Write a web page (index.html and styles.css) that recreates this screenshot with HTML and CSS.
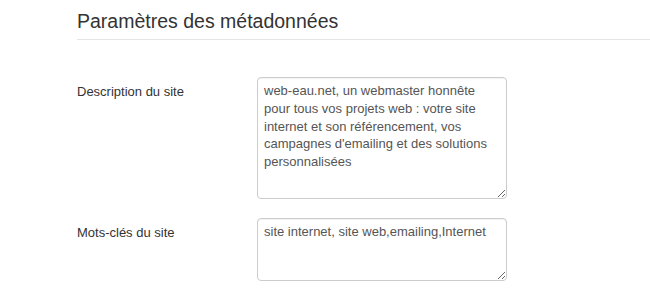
FILE: index.html
```html
<!DOCTYPE html>
<html lang="fr">

<head>
    <meta charset="UTF-8">
    <meta name="viewport" content="width=device-width, initial-scale=1.0">
    <title>Paramètres des métadonnées</title>
    <link rel="stylesheet" href="styles.css">
</head>

<body>
    <form id="metaForm">
        <fieldset class="meta-fieldset">
            <h2 class="meta-title">Paramètres des métadonnées</h2>

            <div class="form-row">
                <label class="form-label" for="siteDesc">Description du site</label>
                <textarea id="siteDesc" class="form-field field-desc">web-eau.net, un webmaster honnête pour tous vos projets web : votre site internet et son référencement, vos campagnes d'emailing et des solutions personnalisées</textarea>
            </div>

            <div class="form-row">
                <label class="form-label" for="siteKeys">Mots-clés du site</label>
                <textarea id="siteKeys" class="form-field field-keys">site internet, site web,emailing,Internet</textarea>
            </div>
        </fieldset>
    </form>
</body>

</html>
```

FILE: styles.css
```css
body {
    margin: 0;
    font-family: "Liberation Sans", Arial, sans-serif;
    font-size: 13px;
    color: #333;
    background-color: #fff;
}

.meta-fieldset {
    border: none;
    margin: 0;
    padding: 0 0 0 77px;
}

.meta-title {
    margin: 0 0 37px 0;
    padding: 11px 0 7px 0;
    font-size: 19.5px;
    font-weight: normal;
    line-height: 21px;
    color: #333;
    border-bottom: 1px solid #e5e5e5;
}

.form-row {
    display: flex;
    align-items: flex-start;
    margin-bottom: 19px;
}

.form-label {
    width: 180px;
    padding-top: 5px;
    line-height: 20px;
}

.form-field {
    box-sizing: border-box;
    width: 250px;
    padding: 4px 6px;
    font-family: "Liberation Sans", Arial, sans-serif;
    font-size: 13px;
    line-height: 17.8px;
    color: #555;
    background-color: #fff;
    border: 1px solid #ccc;
    border-radius: 4px;
    box-shadow: inset 0 1px 1px rgba(0, 0, 0, 0.05);
}

.field-desc {
    height: 122px;
}

.field-keys {
    height: 63px;
}
```
